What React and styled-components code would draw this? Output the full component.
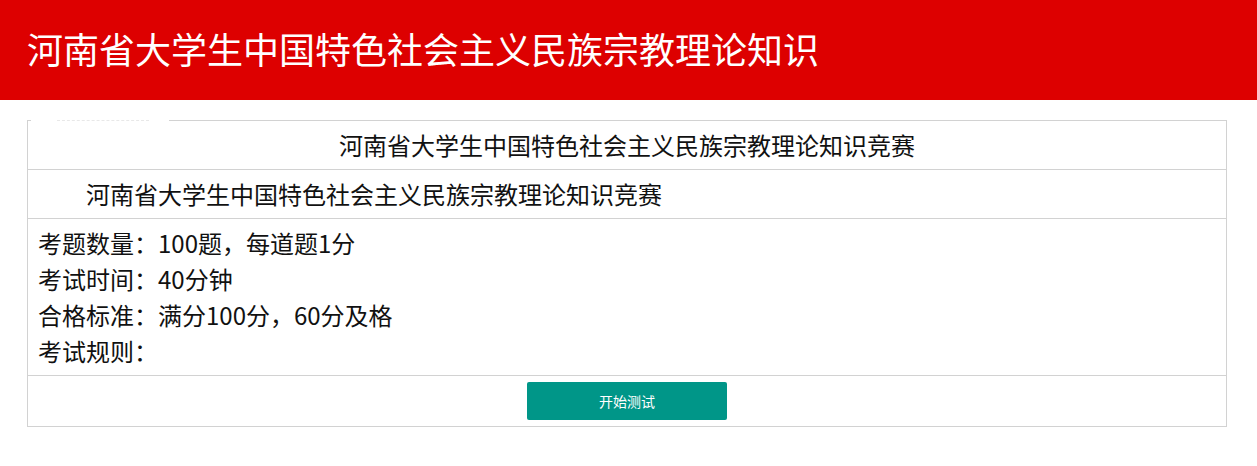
import React from "react";
import styled, { createGlobalStyle } from "styled-components";

const GlobalStyle = createGlobalStyle`
  html, body {
    margin: 0;
    padding: 0;
    background: #fff;
  }
  body {
    font-family: "Noto Sans CJK SC", "Noto Sans", "Liberation Sans", sans-serif;
    color: #111;
  }
`;

const Header = styled.header`
  height: 100px;
  background: #dd0000;
  display: flex;
  align-items: center;
  padding: 0 27px 4px;
  box-sizing: border-box;
`;

const Title = styled.h1`
  margin: 0;
  color: #fff;
  font-size: 36px;
  font-weight: 400;
  line-height: 1;
`;

const Main = styled.main`
  padding: 20px 0 40px 27px;
`;

const Table = styled.div`
  position: relative;
  width: 1200px;
  box-sizing: border-box;
  border: 1px solid #d2d2d2;
`;

// hidden caption sitting on the top border
const Caption = styled.div`
  position: absolute;
  left: 3px;
  top: -1px;
  width: 138px;
  height: 2px;
  background: #fff;
  display: flex;

  &::after {
    content: "";
    margin-left: 26px;
    width: 92px;
    height: 0;
    border-top: 1px dashed #e8e8e8;
  }
`;

const Row = styled.div`
  padding: 6px 10px;
  font-size: 24px;
  line-height: 36px;
  text-align: ${(p) => p.$align || "left"};
  text-indent: ${(p) => (p.$indent ? "2em" : "0")};
  border-top: ${(p) => (p.$first ? "none" : "1px solid #d2d2d2")};
`;

const Line = styled.div`
  white-space: nowrap;
`;

const Action = styled.div`
  border-top: 1px solid #d2d2d2;
  padding: 6px 10px;
  display: flex;
  justify-content: center;
`;

const Button = styled.button`
  width: 200px;
  height: 38px;
  border: none;
  border-radius: 2px;
  background: #009688;
  color: #fff;
  font-family: inherit;
  font-size: 14px;
  cursor: pointer;
`;

const rules = [
  "考题数量：100题，每道题1分",
  "考试时间：40分钟",
  "合格标准：满分100分，60分及格",
  "考试规则：",
];

export default function App() {
  return (
    <>
      <GlobalStyle />
      <Header>
        <Title>河南省大学生中国特色社会主义民族宗教理论知识</Title>
      </Header>
      <Main>
        <Table>
          <Caption />
          <Row $first $align="center">
            河南省大学生中国特色社会主义民族宗教理论知识竞赛
          </Row>
          <Row $indent>河南省大学生中国特色社会主义民族宗教理论知识竞赛</Row>
          <Row>
            {rules.map((r) => (
              <Line key={r}>{r}</Line>
            ))}
          </Row>
          <Action>
            <Button>开始测试</Button>
          </Action>
        </Table>
      </Main>
    </>
  );
}
